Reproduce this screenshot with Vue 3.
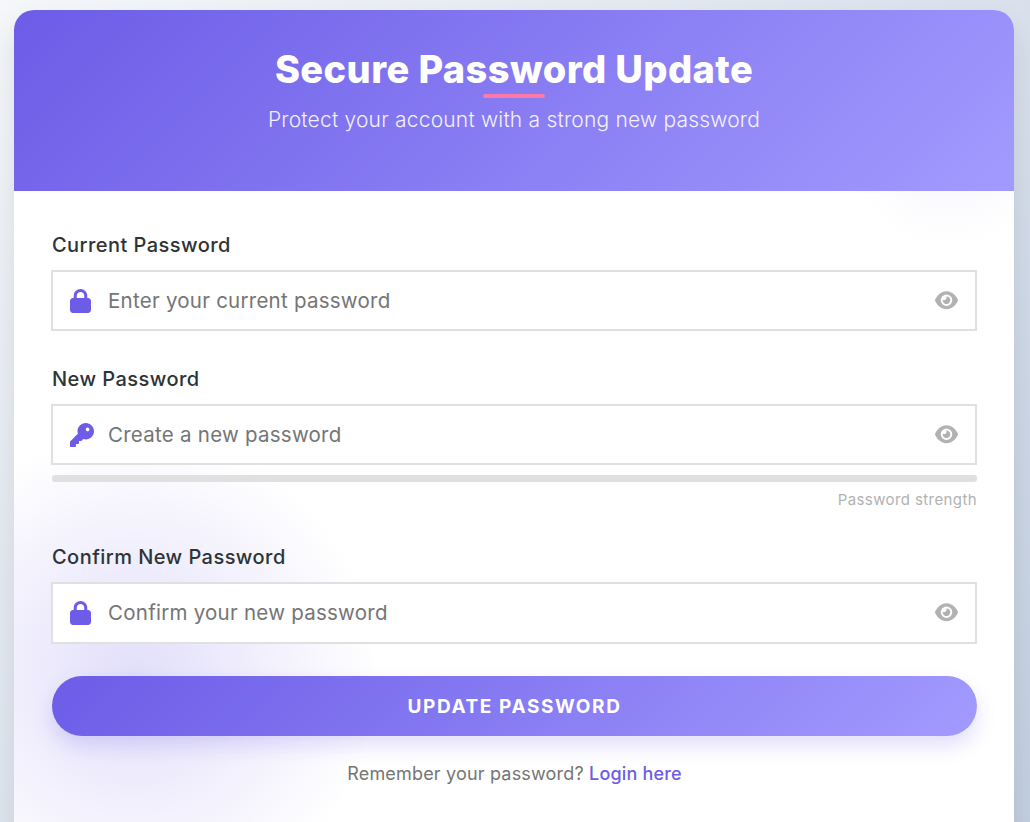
<template>
  <div class="page">
    <div class="card">
      <header class="card-head">
        <h1 class="title">Secure Password Update</h1>
        <p class="subtitle">Protect your account with a strong new password</p>
      </header>

      <form class="form" @submit.prevent>
        <div v-for="field in fields" :key="field.label" class="field" :class="{ 'has-meter': field.meter }">
          <label class="field-label">{{ field.label }}</label>
          <div class="input-wrap">
            <svg
              class="lead-icon"
              :class="field.icon"
              :viewBox="icons[field.icon].box"
              aria-hidden="true"
            >
              <path :d="icons[field.icon].d" />
            </svg>
            <input class="input" type="password" :placeholder="field.placeholder" />
            <svg class="eye" :viewBox="icons.eye.box" aria-hidden="true">
              <path :d="icons.eye.d" />
            </svg>
          </div>
          <template v-if="field.meter">
            <div class="meter"></div>
            <div class="meter-text">Password strength</div>
          </template>
        </div>

        <button class="submit" type="submit">UPDATE PASSWORD</button>
        <p class="login">Remember your password? <a class="login-link" href="#">Login here</a></p>
      </form>
    </div>
  </div>
</template>

<script setup>
const icons = {
  lock: {
    box: "0 0 448 512",
    d: "M144 144v48H304V144c0-44.2-35.8-80-80-80s-80 35.8-80 80zM80 192V144C80 64.5 144.5 0 224 0s144 64.5 144 144v48h16c35.3 0 64 28.7 64 64V448c0 35.3-28.7 64-64 64H64c-35.3 0-64-28.7-64-64V256c0-35.3 28.7-64 64-64H80z",
  },
  key: {
    box: "0 0 512 512",
    d: "M282.3 343.7L248.1 376.1C244.5 381.5 238.4 384 232 384H192V424C192 437.3 181.3 448 168 448H128V488C128 501.3 117.3 512 104 512H24C10.75 512 0 501.3 0 488V408C0 401.6 2.529 395.5 7.029 391L168.3 229.7C162.9 212.8 160 194.7 160 176C160 78.8 238.8 0 336 0C433.2 0 512 78.8 512 176C512 273.2 433.2 352 336 352C317.3 352 299.2 349.1 282.3 343.7zM376 176C398.1 176 416 158.1 416 136C416 113.9 398.1 96 376 96C353.9 96 336 113.9 336 136C336 158.1 353.9 176 376 176z",
  },
  eye: {
    box: "0 0 576 512",
    d: "M288 32c-80.8 0-145.5 36.8-192.6 80.6C48.6 156 17.3 208 2.5 243.7c-3.3 7.9-3.3 16.7 0 24.6C17.3 304 48.6 356 95.4 399.4C142.5 443.2 207.2 480 288 480s145.5-36.8 192.6-80.6c46.8-43.5 78.1-95.4 93-131.1c3.3-7.9 3.3-16.7 0-24.6c-14.9-35.7-46.2-87.7-93-131.1C433.5 68.8 368.8 32 288 32zM144 256a144 144 0 1 1 288 0 144 144 0 1 1 -288 0zm144-64c0 35.3-28.7 64-64 64c-7.1 0-13.9-1.2-20.3-3.3c-5.5-1.8-11.9 1.6-11.7 7.4c.3 6.9 1.3 13.8 3.2 20.7c13.7 51.2 66.4 81.6 117.6 67.9s81.6-66.4 67.9-117.6c-11.1-41.5-47.8-69.4-88.6-71.1c-5.8-.2-9.2 6.1-7.4 11.7c2.1 6.4 3.3 13.2 3.3 20.3z",
  },
};

const fields = [
  { label: "Current Password", placeholder: "Enter your current password", icon: "lock" },
  { label: "New Password", placeholder: "Create a new password", icon: "key", meter: true },
  { label: "Confirm New Password", placeholder: "Confirm your new password", icon: "lock" },
];
</script>

<style>
html,
body {
  margin: 0;
  height: 100%;
  overflow: hidden;
}
</style>

<style scoped>
.page {
  box-sizing: border-box;
  height: 822px;
  padding: 10px 16px 0 14px;
  background: linear-gradient(135deg, #f5f7fa 0%, #c3cfe2 100%);
  font-family: Inter, "Liberation Sans", sans-serif;
  overflow: hidden;
}

.card {
  width: 1000px;
  border-radius: 20px 20px 0 0;
  background: #fff;
  box-shadow: 0 15px 30px rgba(0, 0, 0, 0.1);
  overflow: hidden;
}

.card-head {
  box-sizing: border-box;
  height: 181px;
  padding-top: 36px;
  background: linear-gradient(135deg, #6c5ce7, #a29bfe);
  color: #fff;
  text-align: center;
}

.title {
  position: relative;
  margin: 0;
  font-size: 38px;
  line-height: 46px;
  font-weight: 800;
  letter-spacing: 0.4px;
}

.title::after {
  content: "";
  position: absolute;
  left: 469px;
  top: 48px;
  width: 62px;
  height: 4px;
  border-radius: 2px;
  background: #fd79a8;
}

.subtitle {
  margin: 14px 0 0;
  font-size: 21px;
  line-height: 28px;
  font-weight: 300;
  letter-spacing: 0.2px;
  opacity: 0.9;
}

.form {
  position: relative;
  padding: 40.7px 37px 60px 38px;
  overflow: hidden;
}

.form::before,
.form::after {
  content: "";
  position: absolute;
  border-radius: 50%;
}

.form::before {
  left: -124px;
  top: 240px;
  width: 490px;
  height: 490px;
  background: radial-gradient(circle, rgba(108, 92, 231, 0.2), rgba(108, 92, 231, 0) 70%);
}

.form::after {
  right: -46px;
  top: -161px;
  width: 220px;
  height: 220px;
  background: radial-gradient(circle, rgba(108, 92, 231, 0.06), rgba(108, 92, 231, 0) 70%);
}

.field {
  position: relative;
  z-index: 1;
  margin-bottom: 34.4px;
}

.field.has-meter {
  margin-bottom: 33px;
}

.field-label {
  display: block;
  margin-bottom: 11px;
  font-size: 20px;
  line-height: 27px;
  font-weight: 500;
  letter-spacing: 0.45px;
  color: #2d3436;
}

.input-wrap {
  position: relative;
  margin-left: -1px;
}

.input {
  display: block;
  box-sizing: border-box;
  width: 100%;
  height: 61.6px;
  padding: 0 56px 0 55px;
  border: 2px solid #e0e0e0;
  border-radius: 0;
  outline: none;
  background: #fff;
  font-family: inherit;
  font-size: 20.5px;
  letter-spacing: 0.25px;
}

.input::placeholder {
  color: #757575;
  opacity: 1;
}

.lead-icon {
  position: absolute;
  left: 19px;
  top: 19px;
  height: 24px;
  fill: #6c5ce7;
}

.lead-icon.lock {
  width: 21px;
}

.lead-icon.key {
  width: 24px;
}

.eye {
  position: absolute;
  right: 19px;
  top: 20px;
  width: 23px;
  height: 20.5px;
  fill: #b2b2b2;
}

.meter {
  height: 6.5px;
  margin-top: 9.9px;
  border-radius: 3px;
  background: #e0e0e0;
}

.meter-text {
  margin-top: 7.5px;
  font-size: 15px;
  line-height: 22px;
  letter-spacing: 0.4px;
  color: #b2b2b2;
  text-align: right;
}

.submit {
  position: relative;
  z-index: 1;
  display: block;
  width: 100%;
  height: 60px;
  margin-top: -2px;
  border: none;
  border-radius: 30px;
  background: linear-gradient(135deg, #6c5ce7, #a29bfe);
  box-shadow: 0 10px 20px rgba(108, 92, 231, 0.2);
  color: #fff;
  font-family: inherit;
  font-size: 19px;
  font-weight: 700;
  letter-spacing: 1.6px;
}

.login {
  position: relative;
  z-index: 1;
  margin: 24px 0 0;
  font-size: 18px;
  line-height: 28px;
  letter-spacing: 0.18px;
  color: #757575;
  text-align: center;
}

.login-link {
  color: #6c5ce7;
  font-weight: 500;
  text-decoration: none;
}
</style>
